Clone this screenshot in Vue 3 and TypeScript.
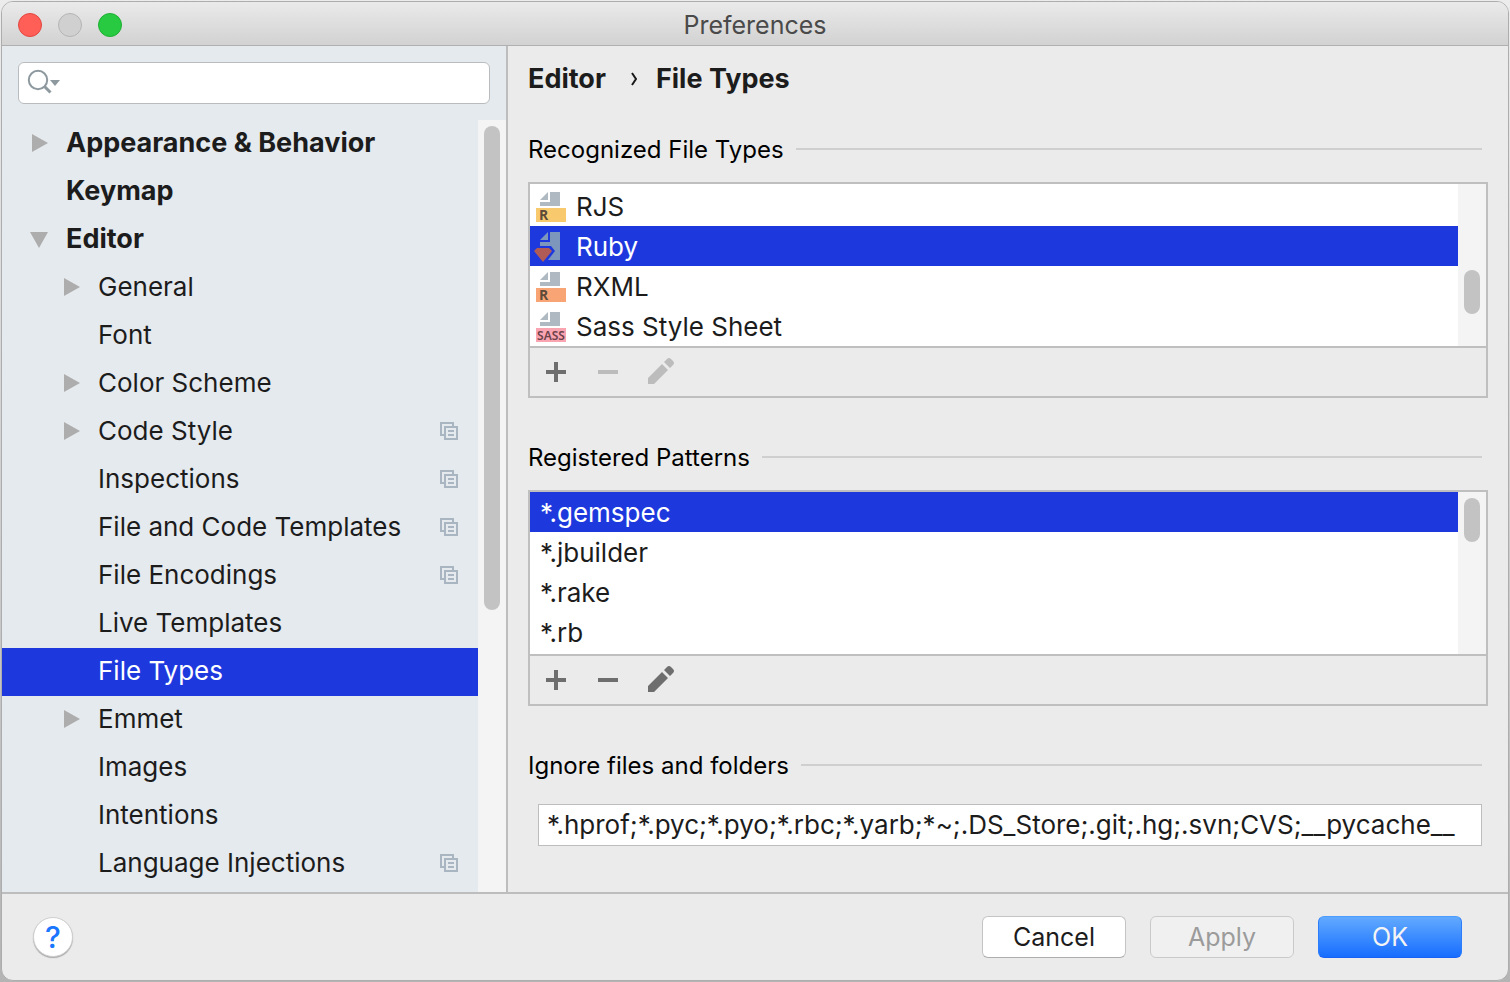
<script setup lang="ts">
import { ref } from 'vue'

interface TreeItem {
  label: string
  level: 0 | 1
  arrow?: 'right' | 'down'
  project?: boolean
}

interface FileType {
  name: string
  kind: 'badge' | 'gem'
  badge?: string
  color?: string
}

const tree: TreeItem[] = [
  { label: 'Appearance & Behavior', level: 0, arrow: 'right' },
  { label: 'Keymap', level: 0 },
  { label: 'Editor', level: 0, arrow: 'down' },
  { label: 'General', level: 1, arrow: 'right' },
  { label: 'Font', level: 1 },
  { label: 'Color Scheme', level: 1, arrow: 'right' },
  { label: 'Code Style', level: 1, arrow: 'right', project: true },
  { label: 'Inspections', level: 1, project: true },
  { label: 'File and Code Templates', level: 1, project: true },
  { label: 'File Encodings', level: 1, project: true },
  { label: 'Live Templates', level: 1 },
  { label: 'File Types', level: 1 },
  { label: 'Emmet', level: 1, arrow: 'right' },
  { label: 'Images', level: 1 },
  { label: 'Intentions', level: 1 },
  { label: 'Language Injections', level: 1, project: true },
]

const fileTypes: FileType[] = [
  { name: 'RJS', kind: 'badge', badge: 'R', color: '#f9c96e' },
  { name: 'Ruby', kind: 'gem' },
  { name: 'RXML', kind: 'badge', badge: 'R', color: '#f9a475' },
  { name: 'Sass Style Sheet', kind: 'badge', badge: 'SASS', color: '#fba4b1' },
]

const patterns: string[] = ['*.gemspec', '*.jbuilder', '*.rake', '*.rb']

const page = ref('File Types')
const fileType = ref('Ruby')
const pattern = ref('*.gemspec')
const query = ref('')
const ignored = ref('*.hprof;*.pyc;*.pyo;*.rbc;*.yarb;*~;.DS_Store;.git;.hg;.svn;CVS;__pycache__')
</script>

<template>
  <div class="desktop">
    <div class="window">
      <header class="titlebar">
        <div class="lights">
          <button class="light close" aria-label="Close"></button>
          <button class="light minimize" aria-label="Minimize" disabled></button>
          <button class="light zoom" aria-label="Zoom"></button>
        </div>
        <h1 class="title">Preferences</h1>
      </header>

      <div class="body">
        <aside class="sidebar">
          <label class="search">
            <svg class="search-icon" viewBox="0 0 34 28" aria-hidden="true">
              <circle cx="11" cy="11" r="9.200" fill="none" stroke="#8d999f" stroke-width="2" />
              <path d="M17.500 17.500l6 6" stroke="#8d999f" stroke-width="3" />
              <path d="M23 11h10l-5 6z" fill="#8d999f" />
            </svg>
            <input v-model="query" type="text" aria-label="Search settings" />
          </label>

          <div class="tree-area">
            <ul class="tree">
              <li v-for="item in tree" :key="item.label">
                <button
                  class="node"
                  :class="['level-' + item.level, { selected: item.label === page }]"
                  @click="page = item.label"
                >
                  <span class="arrow">
                    <svg v-if="item.arrow === 'right'" viewBox="0 0 18 18" aria-hidden="true">
                      <path d="M2 0l16 9l-16 9z" fill="#adadad" />
                    </svg>
                    <svg v-else-if="item.arrow === 'down'" viewBox="0 0 18 18" aria-hidden="true">
                      <path d="M0 2h18l-9 16z" fill="#adadad" />
                    </svg>
                  </span>
                  <span class="node-label">{{ item.label }}</span>
                  <svg v-if="item.project" class="project" viewBox="0 0 18 18" aria-hidden="true">
                    <g fill="none" stroke="#a9b6c1" stroke-width="2">
                      <path d="M4 13H1V1h12v3" />
                      <path d="M5 5h12v12H5z" />
                      <path d="M8 9h6M8 13h6" />
                    </g>
                  </svg>
                </button>
              </li>
            </ul>
            <div class="track"><div class="thumb tree-thumb"></div></div>
          </div>
        </aside>

        <main class="content">
          <nav class="crumbs">
            <a href="#editor">Editor</a>
            <svg viewBox="0 0 8 14" aria-hidden="true">
              <path d="M2 1l4 6l-4 6" fill="none" stroke="#1a1a1a" stroke-width="2" />
            </svg>
            <a href="#file-types">File Types</a>
          </nav>

          <section class="group">
            <h2>Recognized File Types</h2>
            <div class="panel">
              <div class="list-area">
                <ul class="list types">
                  <li v-for="t in fileTypes" :key="t.name">
                    <button class="row" :class="{ selected: t.name === fileType }" @click="fileType = t.name">
                      <svg v-if="t.kind === 'badge'" class="type-icon" viewBox="0 0 32 32" aria-hidden="true">
                        <path d="M14 2v8H6z" fill="#afb9c2" />
                        <path d="M16 2h10v14H6v-4h10z" fill="#afb9c2" />
                        <path d="M2 18h30v14H2z" :fill="t.color" />
                        <text v-if="t.badge === 'R'" x="5" y="30" class="letter">R</text>
                        <text v-else x="17" y="30" text-anchor="middle" class="word">{{ t.badge }}</text>
                      </svg>
                      <svg v-else class="type-icon" viewBox="0 0 32 32" aria-hidden="true">
                        <path d="M14 2v8H6z" fill="#7d96bc" />
                        <path d="M16 2h10v28H14l7-9l-4-5H6v-4h10z" fill="#7d96bc" />
                        <path d="M3 18h12l3 3l-9 11L0 21z" fill="#b15b57" />
                      </svg>
                      <span>{{ t.name }}</span>
                    </button>
                  </li>
                </ul>
                <div class="track"><div class="thumb types-thumb"></div></div>
              </div>
              <div class="tools">
                <button aria-label="Add file type">
                  <svg viewBox="0 0 32 32"><path d="M6 14h8V6h4v8h8v4h-8v8h-4v-8H6z" /></svg>
                </button>
                <button aria-label="Remove file type" disabled>
                  <svg viewBox="0 0 32 32"><path d="M6 14h20v4H6z" /></svg>
                </button>
                <button aria-label="Edit file type" disabled>
                  <svg viewBox="0 0 32 32">
                    <path d="M4 22L18 8l6 6L10 28H4zM20 6l3-3q2-2 4 0l2 2q2 2 0 4l-3 3z" />
                  </svg>
                </button>
              </div>
            </div>
          </section>

          <section class="group">
            <h2>Registered Patterns</h2>
            <div class="panel">
              <div class="list-area">
                <ul class="list">
                  <li v-for="p in patterns" :key="p">
                    <button class="row plain" :class="{ selected: p === pattern }" @click="pattern = p">
                      <span>{{ p }}</span>
                    </button>
                  </li>
                </ul>
                <div class="track"><div class="thumb"></div></div>
              </div>
              <div class="tools">
                <button aria-label="Add pattern">
                  <svg viewBox="0 0 32 32"><path d="M6 14h8V6h4v8h8v4h-8v8h-4v-8H6z" /></svg>
                </button>
                <button aria-label="Remove pattern">
                  <svg viewBox="0 0 32 32"><path d="M6 14h20v4H6z" /></svg>
                </button>
                <button aria-label="Edit pattern">
                  <svg viewBox="0 0 32 32">
                    <path d="M4 22L18 8l6 6L10 28H4zM20 6l3-3q2-2 4 0l2 2q2 2 0 4l-3 3z" />
                  </svg>
                </button>
              </div>
            </div>
          </section>

          <section class="group">
            <h2><label for="ignored">Ignore files and folders</label></h2>
            <div class="ignored"><input id="ignored" v-model="ignored" type="text" /></div>
          </section>
        </main>
      </div>

      <footer class="footer">
        <button class="help" aria-label="Help">?</button>
        <div class="actions">
          <button class="action">Cancel</button>
          <button class="action" disabled>Apply</button>
          <button class="action primary">OK</button>
        </div>
      </footer>
    </div>
  </div>
</template>

<style>
body {
  background: #d2d2d2;
}
</style>

<style scoped>
* {
  box-sizing: border-box;
}

.desktop {
  height: 100vh;
  padding: 1px;
  background: linear-gradient(#ececec, #b4b4b4);
  font-family: Inter, "Liberation Sans", sans-serif;
  font-size: 26px;
  line-height: 40px;
  color: #1c1c1c;
}

button,
input {
  margin: 0;
  padding: 0;
  border: 0;
  background: none;
  font: inherit;
  color: inherit;
  outline: none;
}

ul {
  margin: 0;
  padding: 0;
  list-style: none;
}

svg {
  display: block;
}

.window {
  display: flex;
  flex-direction: column;
  height: 100%;
  border: 1px solid #adadad;
  border-radius: 12px;
  background: #ebebeb;
  overflow: hidden;
}

.titlebar {
  display: grid;
  grid-template-columns: 1fr auto 1fr;
  align-items: center;
  flex: none;
  height: 44px;
  padding: 2px 16px 0;
  border-bottom: 1px solid #b0b0b0;
  background: linear-gradient(#eaeaea, #d2d2d2);
}

.lights {
  display: flex;
  gap: 16px;
}

.light {
  width: 24px;
  height: 24px;
  border: 1px solid;
  border-radius: 50%;
}

.close {
  background: #ff5f57;
  border-color: #e2463f;
}

.minimize {
  background: #d0d0d0;
  border-color: #b4b4b4;
}

.zoom {
  background: #28ca41;
  border-color: #1fae34;
}

.title {
  margin: 0;
  font-size: 25px;
  font-weight: 400;
  color: #4a4a4a;
}

.body {
  display: flex;
  flex: 1;
  min-height: 0;
}

.sidebar {
  display: flex;
  flex-direction: column;
  flex: none;
  width: 506px;
  border-right: 2px solid #bdbdbd;
  background: #e5eaee;
}

.search {
  display: flex;
  align-items: center;
  flex: none;
  height: 42px;
  margin: 16px;
  padding: 0 8px;
  border: 1px solid #b9bcbe;
  border-radius: 6px;
  background: #fff;
}

.search-icon {
  flex: none;
  width: 34px;
  height: 28px;
}

.search input {
  flex: 1;
  min-width: 0;
  padding-left: 8px;
}

.tree-area {
  display: flex;
  flex: 1;
  min-height: 0;
}

.tree {
  flex: 1;
  min-width: 0;
  overflow: hidden;
}

.node {
  display: flex;
  align-items: center;
  width: 100%;
  height: 48px;
  padding: 0 20px 2px 28px;
  text-align: left;
  white-space: nowrap;
}

.level-0 {
  font-size: 27px;
  font-weight: 700;
}

.level-1 {
  padding-left: 60px;
}

.arrow {
  flex: none;
  width: 36px;
}

.arrow svg {
  width: 18px;
  height: 18px;
}

.node-label {
  flex: 1;
}

.project {
  flex: none;
  width: 18px;
  height: 18px;
}

.selected {
  background: #1d39de;
  color: #fff;
}

.track {
  flex: none;
  width: 28px;
  padding: 6px;
  background: #f4f4f4;
}

.thumb {
  width: 16px;
  height: 44px;
  border-radius: 8px;
  background: #c3c3c3;
}

.tree-thumb {
  height: 484px;
}

.types-thumb {
  margin-top: 80px;
}

.content {
  display: flex;
  flex-direction: column;
  flex: 1;
  min-width: 0;
  padding: 13px 20px 0;
}

.crumbs {
  display: flex;
  align-items: center;
  height: 40px;
  margin-bottom: 31px;
  font-size: 27px;
  font-weight: 700;
}

.crumbs a {
  color: inherit;
  text-decoration: none;
}

.crumbs svg {
  width: 8px;
  height: 14px;
  margin: 0 18px 0 24px;
}

.group {
  margin-bottom: 40px;
}

.group h2 {
  display: flex;
  align-items: center;
  gap: 12px;
  margin: 0 6px 12px 0;
  font-size: 24px;
  font-weight: 400;
  line-height: 40px;
  color: #000;
}

.group h2::after {
  content: "";
  flex: 1;
  height: 2px;
  margin-bottom: 2px;
  background: #cfcfcf;
}

.panel {
  border: 2px solid #bfbfbf;
}

.list-area {
  display: flex;
  height: 162px;
  background: #fff;
}

.list {
  flex: 1;
  min-width: 0;
}

.types {
  padding-top: 2px;
}

.row {
  display: flex;
  align-items: center;
  gap: 10px;
  width: 100%;
  height: 40px;
  padding-left: 4px;
  text-align: left;
}

.row span {
  padding-top: 2px;
}

.plain {
  padding-left: 10px;
}

.type-icon {
  flex: none;
  width: 32px;
  height: 32px;
  overflow: visible;
}

.letter,
.word {
  font-family: "Open Sans", sans-serif;
  font-size: 14px;
  font-weight: 700;
  fill: #5d4a38;
}

.word {
  font-family: "Noto Sans", sans-serif;
  font-size: 12px;
  font-weight: 600;
  fill: #6b424a;
}

.tools {
  display: flex;
  align-items: center;
  gap: 20px;
  height: 50px;
  padding: 0 10px;
  border-top: 2px solid #bfbfbf;
}

.tools svg {
  width: 32px;
  height: 32px;
  fill: #6e6e6e;
}

.tools button:disabled svg {
  fill: #bcbcbc;
}

.ignored {
  height: 42px;
  margin: 18px 6px 0 10px;
  padding: 0 10px 0 8px;
  border: 1px solid #bdbdbd;
  background: #fff;
}

.ignored input {
  display: block;
  width: 100%;
  height: 40px;
}

.footer {
  display: flex;
  align-items: center;
  justify-content: space-between;
  flex: none;
  height: 88px;
  padding: 0 46px 0 31px;
  border-top: 2px solid #bdbdbd;
}

.help {
  width: 40px;
  height: 40px;
  border: 1px solid #cfcfcf;
  border-radius: 50%;
  background: #fff;
  box-shadow: 0 1px 1px #a8a8a8;
  font-size: 30px;
  font-weight: 500;
  line-height: 38px;
  color: #1a76ff;
}

.actions {
  display: flex;
  gap: 24px;
}

.action {
  width: 144px;
  height: 42px;
  border: 1px solid #c4c4c4;
  border-bottom-color: #adadad;
  border-radius: 6px;
  background: #fff;
  font-size: 25px;
}

.action:disabled {
  border-color: #cacaca;
  background: #f0f0f0;
  color: #9b9b9b;
}

.primary {
  border-color: #4c9dfb #2c7dfc #1a62f5;
  background: linear-gradient(#62aaff, #176dff);
  color: #f4f4f4;
}
</style>
